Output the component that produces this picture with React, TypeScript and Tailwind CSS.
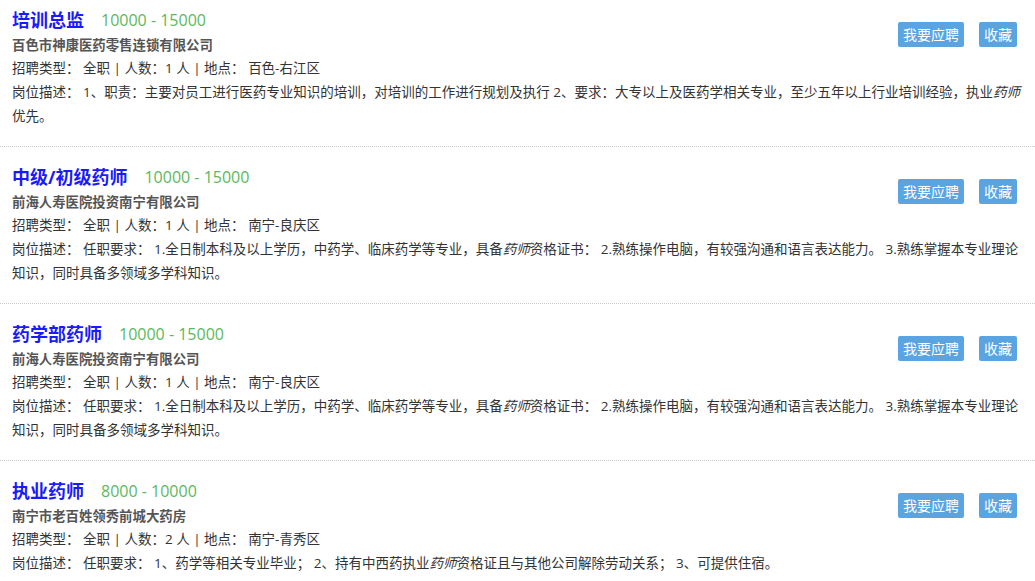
const jobs = [
  {
    title: '培训总监',
    salary: '10000 - 15000',
    company: '百色市神康医药零售连锁有限公司',
    count: '1',
    place: '百色-右江区',
    desc: ['1、职责：主要对员工进行医药专业知识的培训，对培训的工作进行规划及执行 2、要求：大专以上及医药学相关专业，至少五年以上行业培训经验，执业', '药师', '优先。'],
  },
  {
    title: '中级/初级药师',
    salary: '10000 - 15000',
    company: '前海人寿医院投资南宁有限公司',
    count: '1',
    place: '南宁-良庆区',
    desc: ['任职要求： 1.全日制本科及以上学历，中药学、临床药学等专业，具备', '药师', '资格证书： 2.熟练操作电脑，有较强沟通和语言表达能力。 3.熟练掌握本专业理论知识，同时具备多领域多学科知识。'],
  },
  {
    title: '药学部药师',
    salary: '10000 - 15000',
    company: '前海人寿医院投资南宁有限公司',
    count: '1',
    place: '南宁-良庆区',
    desc: ['任职要求： 1.全日制本科及以上学历，中药学、临床药学等专业，具备', '药师', '资格证书： 2.熟练操作电脑，有较强沟通和语言表达能力。 3.熟练掌握本专业理论知识，同时具备多领域多学科知识。'],
  },
  {
    title: '执业药师',
    salary: '8000 - 10000',
    company: '南宁市老百姓领秀前城大药房',
    count: '2',
    place: '南宁-青秀区',
    desc: ['任职要求： 1、药学等相关专业毕业； 2、持有中西药执业', '药师', '资格证且与其他公司解除劳动关系； 3、可提供住宿。'],
  },
];

export default function App() {
  return (
    <div className="w-[1035px] h-[581px] overflow-hidden bg-white font-['Open_Sans','Noto_Sans_CJK_SC',sans-serif] text-[#333]">
      {jobs.map((job, i) => (
        <div
          key={i}
          className={
            'pl-3 pr-3 pb-[18px] ' +
            (i === 0 ? 'pt-[6px] ' : 'pt-4 ') +
            (i < jobs.length - 1 ? 'border-b border-dotted border-[#c8c8c8]' : '')
          }
        >
          <div className="flex items-start justify-between">
            <div>
              <div className="flex items-center h-[28px]">
                <span className="text-[18px] font-bold text-[#1a1aff]">{job.title}</span>
                <span className="ml-[17px] text-[16px] text-[#5cb85c]">{job.salary}</span>
              </div>
              <div className="text-[13.4px] leading-[22px] font-bold text-[#555]">{job.company}</div>
            </div>
            <div className="flex gap-[15px] mt-4 mr-[6px]">
              <button className="h-[25px] px-[5px] rounded-[2px] bg-[#5ba4e2] text-white text-[14px] leading-[25px]">我要应聘</button>
              <button className="h-[25px] px-[5px] rounded-[2px] bg-[#5ba4e2] text-white text-[14px] leading-[25px]">收藏</button>
            </div>
          </div>
          <div className="text-[13.5px] leading-[24px]">
            招聘类型： 全职 | 人数：{job.count} 人 | 地点： {job.place}
          </div>
          <div className="text-[13.5px] leading-[24px]">
            岗位描述： {job.desc[0]}
            <em className="italic">{job.desc[1]}</em>
            {job.desc[2]}
          </div>
        </div>
      ))}
    </div>
  );
}
